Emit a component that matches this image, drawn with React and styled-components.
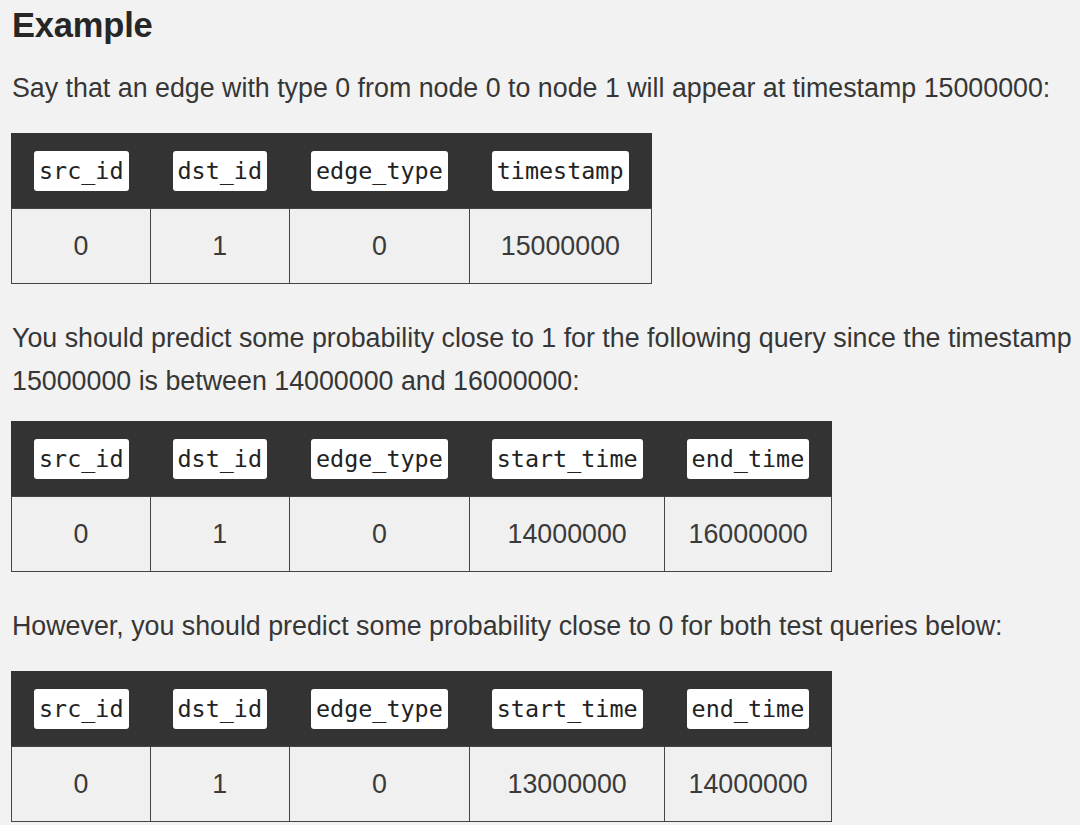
import React from 'react'
import styled, { createGlobalStyle } from 'styled-components'

const GlobalStyle = createGlobalStyle`
	html, body {
		margin: 0;
		padding: 0;
		background: #f2f2f2;
	}
	body {
		font-family: 'Liberation Sans', Arial, sans-serif;
		color: #333;
	}
`

const Page = styled.div`
	padding: 0 12px;
	width: 1080px;
	box-sizing: border-box;
	overflow: hidden;
`

const Heading = styled.h2`
	margin: 0 0 21px;
	padding-top: 4px;
	font-size: 34.5px;
	line-height: 42px;
	font-weight: 700;
	color: #262626;
	letter-spacing: -0.2px;
`

const Paragraph = styled.p`
	margin: 0 0 ${({ gap }) => gap || 21}px;
	font-size: 26.8px;
	line-height: 43px;
	color: #363636;
	white-space: nowrap;
`

const Table = styled.table`
	border-collapse: collapse;
	margin: 0 0 33px -1px;
	border: 1px solid #333;
`

const HeadCell = styled.th`
	background: #333;
	padding: 17px 22px;
	height: 75px;
	box-sizing: border-box;
	text-align: center;
	font-weight: 400;
`

const Code = styled.code`
	display: inline-block;
	background: #fff;
	color: #222;
	border-radius: 3px;
	padding: 0 5px;
	font-family: 'DejaVu Sans Mono', 'Liberation Mono', monospace;
	font-size: 23.4px;
	line-height: 40px;
`

const Cell = styled.td`
	border: 1px solid #444;
	height: 75px;
	box-sizing: border-box;
	padding: 0 22px;
	text-align: center;
	font-size: 26.8px;
	color: #3a3a3a;
	background: #f0f0f0;
`

const DataTable = ({ columns, row }) => (
	<Table>
		<thead>
			<tr>
				{columns.map((c) => (
					<HeadCell key={c}>
						<Code>{c}</Code>
					</HeadCell>
				))}
			</tr>
		</thead>
		<tbody>
			<tr>
				{row.map((v, i) => (
					<Cell key={i}>{v}</Cell>
				))}
			</tr>
		</tbody>
	</Table>
)

const queryColumns = ['src_id', 'dst_id', 'edge_type', 'start_time', 'end_time']

export default function App() {
	return (
		<Page>
			<GlobalStyle />
			<Heading>Example</Heading>
			<Paragraph gap={23}>Say that an edge with type 0 from node 0 to node 1 will appear at timestamp 15000000:</Paragraph>
			<DataTable columns={['src_id', 'dst_id', 'edge_type', 'timestamp']} row={['0', '1', '0', '15000000']} />
			<Paragraph gap={18}>
				You should predict some probability close to 1 for the following query since the timestamp
				<br />
				15000000 is between 14000000 and 16000000:
			</Paragraph>
			<DataTable columns={queryColumns} row={['0', '1', '0', '14000000', '16000000']} />
			<Paragraph gap={23}>However, you should predict some probability close to 0 for both test queries below:</Paragraph>
			<DataTable columns={queryColumns} row={['0', '1', '0', '13000000', '14000000']} />
		</Page>
	)
}
